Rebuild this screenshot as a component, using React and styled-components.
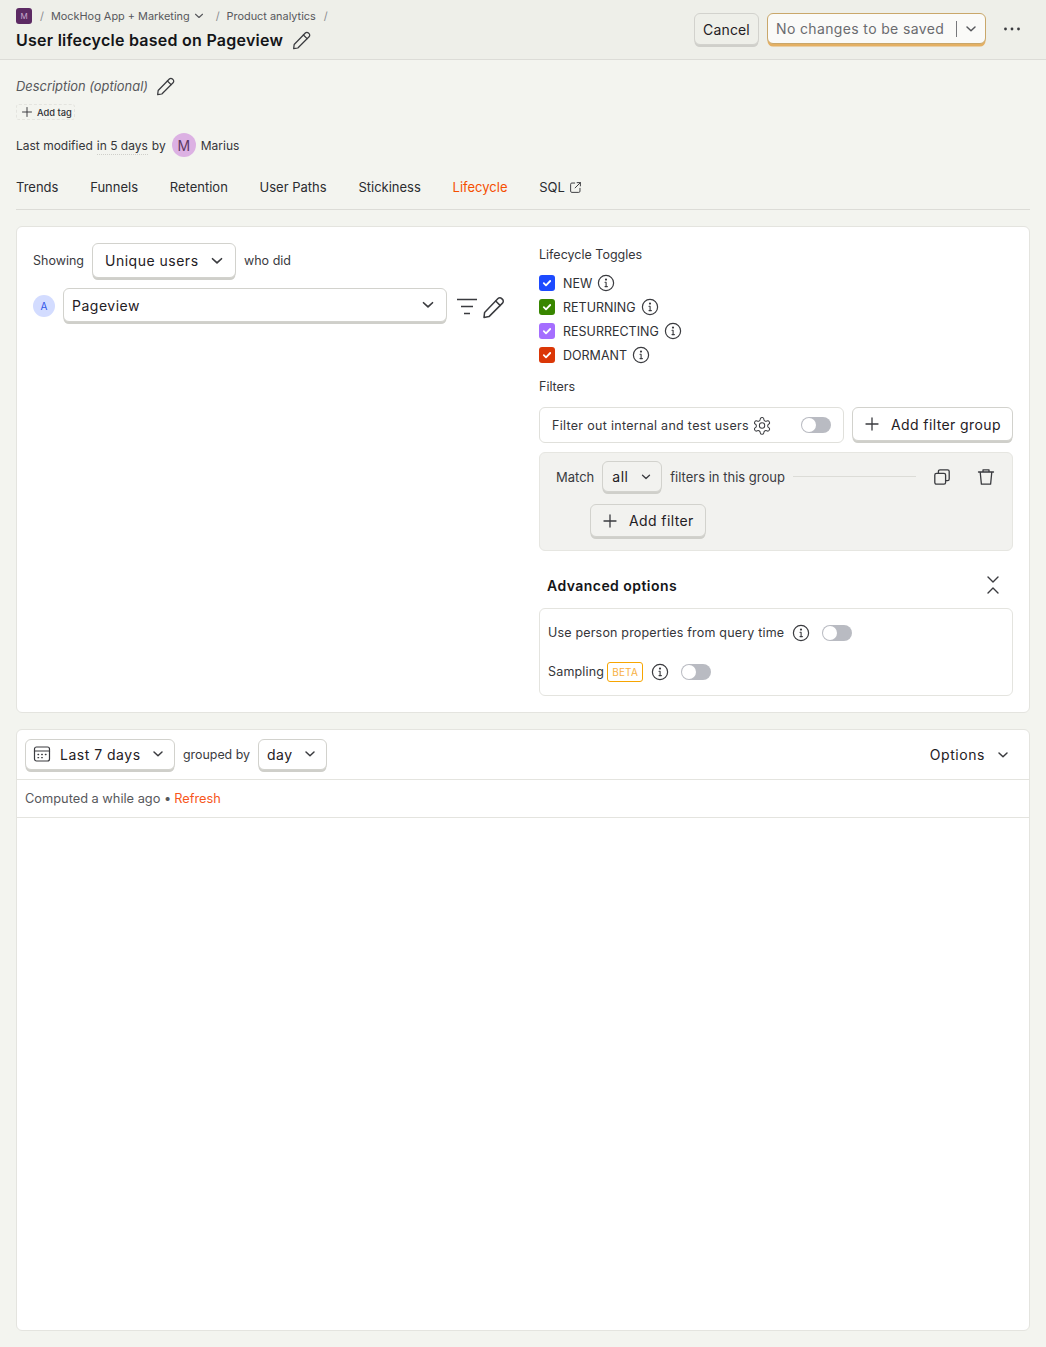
import React from 'react';
import styled, { createGlobalStyle } from 'styled-components';

const Global = createGlobalStyle`
  html, body { margin: 0; padding: 0; background: #f3f4ef; }
  body { font-family: Inter, "Noto Sans", sans-serif; font-size: 13px; color: #35363a; }
  * { box-sizing: border-box; }
`;

const Page = styled.div`
  width: 1046px;
  height: 1347px;
  overflow: hidden;
  background: #f3f4ef;
`;

const TopBar = styled.header`
  height: 60px;
  background: #eeefe9;
  border-bottom: 1px solid #dcdcd7;
  padding: 0 16px;
  display: flex;
  justify-content: space-between;
`;
const TitleBlock = styled.div`
  padding-top: 8px;
`;
const Crumbs = styled.div`
  display: flex;
  align-items: center;
  height: 16px;
  font-size: 10.9px;
  color: #57585c;
`;
const Logo = styled.span`
  width: 16px;
  height: 16px;
  border-radius: 3px;
  background: #5c2a63;
  color: #c9a9cf;
  font-size: 8px;
  display: flex;
  align-items: center;
  justify-content: center;
`;
const Slash = styled.span`
  color: #8a8b8f;
  margin: 0 ${p => p.$r ?? 7}px 0 ${p => p.$l ?? 8}px;
`;
const TitleRow = styled.div`
  display: flex;
  align-items: center;
  gap: 9px;
  height: 32px;
`;
const Title = styled.h1`
  margin: 0;
  font-size: 16px;
  line-height: 20px;
  font-weight: 600;
  letter-spacing: 0.25px;
  color: #141518;
`;
const Actions = styled.div`
  display: flex;
  align-items: flex-start;
  padding-top: 13px;
`;
const Btn = styled.button`
  font-family: inherit;
  display: inline-flex;
  align-items: center;
  justify-content: ${p => p.$between ? 'space-between' : 'flex-start'};
  flex: none;
  width: ${p => p.$w ? `${p.$w}px` : 'auto'};
  height: ${p => p.$h ?? 32}px;
  padding: 0 ${p => p.$pr ?? 10}px 0 ${p => p.$pl ?? 12}px;
  margin: 0;
  background: ${p => p.$bg ?? '#fff'};
  border: 1px solid #d2d2cd;
  border-radius: 6px;
  box-shadow: 0 2.5px 0 -0.5px #cfcfca;
  font-size: 14px;
  font-weight: 400;
  letter-spacing: 0.5px;
  color: #1f2024;
  white-space: nowrap;
`;
const CancelBtn = styled(Btn)`
  background: #eeefe9;
  margin-right: 8px;
  padding: 0;
  width: 65px;
  justify-content: center;
  letter-spacing: 0.15px;
`;
const SaveBtn = styled.button`
  font-family: inherit;
  width: 219px;
  height: 31px;
  display: flex;
  align-items: center;
  padding: 0 0 0 8px;
  background: #fafaf8;
  border: 1px solid #c9a76a;
  border-radius: 6px;
  box-shadow: 0 3px 0 -0.5px #e4b063;
  font-size: 14px;
  letter-spacing: 0.36px;
  color: #6a6b6f;
  white-space: nowrap;
`;
const SaveDivider = styled.span`
  width: 1px;
  height: 16px;
  background: #77787c;
  margin: 0 0 0 12px;
`;
const MoreBtn = styled.span`
  display: flex;
  margin: 8px 8px 0 16px;
`;

const Main = styled.main`
  padding: 0 16px;
`;
const Description = styled.div`
  display: flex;
  align-items: center;
  gap: 8px;
  height: 20px;
  margin-top: 16px;
  font-style: italic;
  color: #57585c;
  font-size: 12.9px;
`;
const TagButton = styled.div`
  margin-top: 8px;
  width: 59px;
  height: 16px;
  border: 1px dashed #e4e4df;
  border-radius: 3px;
  display: flex;
  align-items: center;
  gap: 4px;
  padding-left: 4px;
  font-size: 9.3px;
  font-weight: 500;
  color: #2f3034;
  white-space: nowrap;
`;
const Modified = styled.div`
  display: flex;
  align-items: center;
  height: 24px;
  margin-top: 13px;
  font-size: 12px;
  color: #35363a;
`;
const Dotted = styled.span`
  margin: 0 4px -2px;
  border-bottom: 1px dotted #cfcfca;
  padding-bottom: 1px;
`;
const Avatar = styled.span`
  width: 24px;
  height: 24px;
  border-radius: 50%;
  background: #dcb1e3;
  color: #5c3a62;
  font-size: 14px;
  display: flex;
  align-items: center;
  justify-content: center;
  margin: 0 5px 0 6px;
`;
const Tabs = styled.nav`
  display: flex;
  gap: 31.75px;
  margin-top: 22px;
  padding-bottom: 14px;
  border-bottom: 1px solid #dcdcd7;
`;
const Tab = styled.span`
  display: inline-flex;
  align-items: center;
  gap: 4px;
  font-size: 13px;
  line-height: 16px;
  color: ${p => p.$active ? '#f54e00' : '#2b2c30'};
`;
const Card = styled.section`
  background: #fff;
  border: 1px solid #e4e4df;
  border-radius: 6px;
`;
const QueryCard = styled(Card)`
  margin-top: 16px;
  height: 487px;
  padding: 16px;
  display: grid;
  grid-template-columns: 474px 474px;
  column-gap: 32px;
`;
const Column = styled.div`
  display: flex;
  flex-direction: column;
`;
const ShowingRow = styled.div`
  display: flex;
  align-items: center;
  gap: 8px;
  color: #3a3b3f;
  font-size: 12.5px;
`;
const SeriesRow = styled.div`
  display: flex;
  align-items: center;
  margin-top: 10px;
`;
const SeriesBadge = styled.span`
  flex: none;
  width: 22px;
  height: 22px;
  border-radius: 50%;
  background: #d3dcff;
  color: #2f55e8;
  font-size: 10px;
  display: flex;
  align-items: center;
  justify-content: center;
  margin: 2px 8px 0 0;
`;
const SeriesIcons = styled.span`
  display: flex;
  align-items: center;
  gap: 3px;
  margin: 3px 0 0 8px;
`;
const Label = styled.div`
  font-size: 12.5px;
  line-height: 16px;
  color: #35363a;
  margin-top: ${p => p.$mt ?? 0}px;
`;
const Toggles = styled.div`
  margin-top: 10px;
  display: flex;
  flex-direction: column;
  gap: 4px;
`;
const ToggleRow = styled.label`
  display: flex;
  align-items: center;
  height: 20px;
  font-size: 12.5px;
  color: #2f3034;
`;
const Check = styled.span`
  width: 16px;
  height: 16px;
  border-radius: 3px;
  background: ${p => p.$c};
  display: flex;
  align-items: center;
  justify-content: center;
  margin-right: 8px;
`;
const IconSlot = styled.span`
  display: flex;
  margin-left: ${p => p.$ml ?? 5}px;
`;
const FilterRow = styled.div`
  display: flex;
  gap: 8px;
  margin-top: 12px;
`;
const InternalBox = styled.div`
  width: 305px;
  height: 36px;
  border: 1px solid #e0e0db;
  border-radius: 6px;
  display: flex;
  align-items: center;
  padding: 0 12px;
  font-size: 12.5px;
  letter-spacing: 0.3px;
  color: #35363a;
  gap: 3px;
  white-space: nowrap;
`;
const Switch = styled.span`
  position: relative;
  display: block;
  flex: none;
  width: 30px;
  height: 16px;
  border-radius: 8px;
  background: #b9bbc2;
  margin-left: ${p => p.$ml ?? 0}px;
  &::after {
    content: '';
    position: absolute;
    left: 1px;
    top: 1px;
    width: 14px;
    height: 14px;
    border-radius: 50%;
    background: #fff;
  }
`;
const BtnLabel = styled.span`
  margin-left: ${p => p.$ml ?? 11}px;
  letter-spacing: 0.4px;
`;
const Group = styled.div`
  margin-top: 9px;
  height: 99px;
  background: #f2f2ef;
  border: 1px solid #e6e6e1;
  border-radius: 6px;
  padding: 8px 16px;
`;
const GroupHead = styled.div`
  display: flex;
  align-items: center;
  font-size: 13px;
  color: #3a3b3f;
`;
const MatchBtn = styled(Btn)`
  margin: 0 8px;
`;
const Rule = styled.span`
  width: 123px;
  height: 1px;
  background: #dcdcd7;
  margin: 0 17px 0 8px;
`;
const IconGap = styled.span`
  width: 26px;
`;
const AddFilter = styled(Btn)`
  margin: 12px 0 0 34px;
  background: #f2f2ef;
`;
const AdvHead = styled.div`
  display: flex;
  align-items: center;
  justify-content: space-between;
  height: 36px;
  margin-top: 16px;
  padding: 0 10px 0 8px;
  font-size: 14px;
  font-weight: 600;
  letter-spacing: 0.45px;
  color: #141518;
`;
const AdvBox = styled.div`
  margin-top: 5px;
  height: 88px;
  border: 1px solid #e4e4df;
  border-radius: 6px;
  padding: 0 8px;
  display: flex;
  flex-direction: column;
`;
const AdvRow = styled.div`
  display: flex;
  align-items: center;
  height: 39px;
  margin-top: ${p => p.$mt ?? 0}px;
  font-size: 12.5px;
  letter-spacing: 0.18px;
  color: #35363a;
`;
const Beta = styled.span`
  border: 1px solid #f7a501;
  border-radius: 3px;
  color: #f7b042;
  font-size: 10px;
  line-height: 18px;
  height: 20px;
  padding: 0 4px;
  margin-left: 3px;
`;
const ResultCard = styled(Card)`
  margin-top: 16px;
  height: 602px;
`;
const ResultBar = styled.div`
  height: 50px;
  border-bottom: 1px solid #e4e4df;
  display: flex;
  align-items: center;
  padding: 0 8px 1px;
  gap: 8px;
  font-size: 12.4px;
  color: #3a3b3f;
`;
const DateLabel = styled.span`
  display: flex;
  align-items: center;
  gap: 9px;
`;
const OptionsBtn = styled.span`
  margin: 1px 0 0 auto;
  display: flex;
  align-items: center;
  gap: 10px;
  padding-right: 10px;
  font-size: 14px;
  font-weight: 400;
  letter-spacing: 0.55px;
  color: #1f2024;
`;
const Computed = styled.div`
  height: 38px;
  border-bottom: 1px solid #e4e4df;
  display: flex;
  align-items: center;
  padding: 0 8px;
  gap: 3px;
  font-size: 12.8px;
  color: #57585c;
`;
const Refresh = styled.span`
  color: #f7571b;
`;

const Svg = ({ size = 16, sw = 1.4, color = '#3a3b3f', vb = 24, children }) => (
  <svg width={size} height={size} viewBox={`0 0 ${vb} ${vb}`} fill="none" stroke={color} strokeWidth={sw} strokeLinecap="round" strokeLinejoin="round">{children}</svg>
);
const Pencil = ({ size = 20 }) => (
  <Svg size={size} sw={1.5}>
    <path d="M2.6 17.4 16 3.6a2.6 2.6 0 0 1 3.7 0l.8.8a2.6 2.6 0 0 1 0 3.7L7 21.6l-5 .8z" />
    <path d="m13.7 6 4.4 4.4" />
  </Svg>
);
const Chevron = ({ size = 16, color = '#3a3b3f', sw = 1.5 }) => (
  <Svg size={size} sw={sw} color={color} vb={16}><path d="m4 6 4 3.7L12 6" /></Svg>
);
const Plus = ({ size = 16, color = '#3a3b3f', sw = 1.3 }) => (
  <Svg size={size} sw={sw} color={color} vb={16}><path d="M8 2v12M2 8h12" /></Svg>
);
const Info = () => (
  <Svg size={18} sw={1.2} vb={18} color="#3a3b3f">
    <circle cx="9" cy="9" r="7.6" />
    <path d="M8 8.3h1.1v4.2M8 12.6h2.4" strokeWidth="1.1" />
    <circle cx="9" cy="5.6" r=".5" fill="#3a3b3f" />
  </Svg>
);
const CheckMark = () => (
  <svg width="12" height="12" viewBox="0 0 12 12" fill="none" stroke="#fff" strokeWidth="1.8" strokeLinecap="round" strokeLinejoin="round">
    <path d="m2.8 6.2 2.2 2.1 4.2-4.3" />
  </svg>
);
const FilterLines = () => (
  <Svg size={24} sw={1.6} vb={24} color="#3a3b3f"><path d="M2 4.5h20M6 11.5h12M9 18.5h6" strokeLinecap="butt" /></Svg>
);
const Gear = () => (
  <Svg size={21} sw={1.2} vb={24} color="#3a3b3f">
    <circle cx="12" cy="12" r="3.2" />
    <path d="M12.2 2.5h-.4a2 2 0 0 0-2 2v.2a2 2 0 0 1-1 1.7l-.4.3a2 2 0 0 1-2 0l-.2-.1a2 2 0 0 0-2.7.7l-.2.4a2 2 0 0 0 .7 2.7l.2.1a2 2 0 0 1 1 1.7v.6a2 2 0 0 1-1 1.7l-.2.1a2 2 0 0 0-.7 2.7l.2.4a2 2 0 0 0 2.7.7l.2-.1a2 2 0 0 1 2 0l.4.3a2 2 0 0 1 1 1.7v.2a2 2 0 0 0 2 2h.4a2 2 0 0 0 2-2v-.2a2 2 0 0 1 1-1.7l.4-.3a2 2 0 0 1 2 0l.2.1a2 2 0 0 0 2.7-.7l.2-.4a2 2 0 0 0-.7-2.7l-.2-.1a2 2 0 0 1-1-1.7v-.6a2 2 0 0 1 1-1.7l.2-.1a2 2 0 0 0 .7-2.7l-.2-.4a2 2 0 0 0-2.7-.7l-.2.1a2 2 0 0 1-2 0l-.4-.3a2 2 0 0 1-1-1.7v-.2a2 2 0 0 0-2-2z" />
  </Svg>
);
const CopyIcon = () => (
  <Svg size={18} sw={1.3} vb={18}>
    <rect x="1.8" y="5.4" width="10.8" height="10.8" rx="1.6" />
    <path d="M5.4 5.2V3.4a1.6 1.6 0 0 1 1.6-1.6h7.6a1.6 1.6 0 0 1 1.6 1.6V11a1.6 1.6 0 0 1-1.6 1.6h-1.9" />
  </Svg>
);
const Trash = () => (
  <Svg size={18} sw={1.3} vb={18}>
    <path d="M1.5 4h15M6 4V1.8h6V4M3.2 4l1.2 12.2h9.2L14.8 4" />
  </Svg>
);
const Collapse = () => (
  <Svg size={20} sw={1.4} vb={20}>
    <path d="m5 2 5 5 5-5M5 18l5-5 5 5" />
  </Svg>
);
const Calendar = () => (
  <Svg size={18} sw={1.2} vb={18}>
    <rect x="1.5" y="2" width="15" height="14" rx="2" />
    <path d="M1.5 6h15" />
    <path d="M5 9.5h.6M8.7 9.5h.6M12.4 9.5h.6M5 12.7h.6M8.7 12.7h.6" strokeWidth="1.3" />
  </Svg>
);
const External = () => (
  <Svg size={13} sw={1.2} vb={16}>
    <path d="M7 2.5H3.5a1.5 1.5 0 0 0-1.5 1.5v8.5A1.5 1.5 0 0 0 3.5 14H12a1.5 1.5 0 0 0 1.5-1.5V9" />
    <path d="M10 2h4v4M14 2 7.5 8.5" />
  </Svg>
);
const Dots = () => (
  <svg width="20" height="16" viewBox="0 0 20 16" fill="#3a3b3f">
    <circle cx="3.5" cy="8" r="1.4" /><circle cx="10" cy="8" r="1.4" /><circle cx="16.5" cy="8" r="1.4" />
  </svg>
);

const TAB_NAMES = ['Trends', 'Funnels', 'Retention', 'User Paths', 'Stickiness', 'Lifecycle'];
const TOGGLES = [['NEW', '#1d4aff'], ['RETURNING', '#388600'], ['RESURRECTING', '#a56eff'], ['DORMANT', '#db3707']];

export default function App() {
  return (
    <Page>
      <Global />
      <TopBar>
        <TitleBlock>
          <Crumbs>
            <Logo>M</Logo>
            <Slash>/</Slash>
            MockHog App + Marketing
            <IconSlot $ml={2}><Chevron size={14} color="#57585c" sw={1.3} /></IconSlot>
            <Slash $l={10}>/</Slash>
            Product analytics
            <Slash>/</Slash>
          </Crumbs>
          <TitleRow>
            <Title>User lifecycle based on Pageview</Title>
            <Pencil />
          </TitleRow>
        </TitleBlock>
        <Actions>
          <CancelBtn>Cancel</CancelBtn>
          <SaveBtn>
            No changes to be saved
            <SaveDivider />
            <IconSlot $ml={6}><Chevron size={16} color="#57585c" /></IconSlot>
          </SaveBtn>
          <MoreBtn><Dots /></MoreBtn>
        </Actions>
      </TopBar>
      <Main>
        <Description>Description (optional)<Pencil /></Description>
        <TagButton><Plus size={12} />Add tag</TagButton>
        <Modified>
          Last modified<Dotted>in 5 days</Dotted>by
          <Avatar>M</Avatar>Marius
        </Modified>
        <Tabs>
          {TAB_NAMES.map(t => <Tab key={t} $active={t === 'Lifecycle'}>{t}</Tab>)}
          <Tab>SQL <External /></Tab>
        </Tabs>
        <QueryCard>
          <Column>
            <ShowingRow>
              Showing
              <Btn $w={144} $h={35} $between $pl={12} $pr={9}>Unique users<Chevron size={18} /></Btn>
              who did
            </ShowingRow>
            <SeriesRow>
              <SeriesBadge>A</SeriesBadge>
              <Btn $w={384} $h={34} $between $pl={8} $pr={9}>Pageview<Chevron size={18} /></Btn>
              <SeriesIcons><FilterLines /><Pencil size={24} /></SeriesIcons>
            </SeriesRow>
          </Column>
          <Column>
            <Label $mt={4}>Lifecycle Toggles</Label>
            <Toggles>
              {TOGGLES.map(([name, c]) => (
                <ToggleRow key={name}>
                  <Check $c={c}><CheckMark /></Check>
                  {name}
                  <IconSlot><Info /></IconSlot>
                </ToggleRow>
              ))}
            </Toggles>
            <Label $mt={14}>Filters</Label>
            <FilterRow>
              <InternalBox>
                Filter out internal and test users
                <Gear />
                <Switch $ml={26} />
              </InternalBox>
              <Btn $w={161} $h={34} $pl={11}><Plus size={16} /><BtnLabel>Add filter group</BtnLabel></Btn>
            </FilterRow>
            <Group>
              <GroupHead>
                Match
                <MatchBtn $w={60} $h={31} $between $pl={9} $pr={8} $bg="#f2f2ef">all<Chevron size={14} /></MatchBtn>
                filters in this group
                <Rule />
                <CopyIcon />
                <IconGap />
                <Trash />
              </GroupHead>
              <AddFilter $w={116} $h={33} $pl={11}><Plus size={16} /><BtnLabel>Add filter</BtnLabel></AddFilter>
            </Group>
            <AdvHead>Advanced options<Collapse /></AdvHead>
            <AdvBox>
              <AdvRow $mt={4}>
                Use person properties from query time
                <IconSlot $ml={8}><Info /></IconSlot>
                <Switch $ml={12} />
              </AdvRow>
              <AdvRow>
                Sampling<Beta>BETA</Beta>
                <IconSlot $ml={8}><Info /></IconSlot>
                <Switch $ml={12} />
              </AdvRow>
            </AdvBox>
          </Column>
        </QueryCard>
        <ResultCard>
          <ResultBar>
            <Btn $w={150} $h={31} $between $pl={7} $pr={8}>
              <DateLabel><Calendar />Last 7 days</DateLabel><Chevron size={16} />
            </Btn>
            grouped by
            <Btn $w={69} $h={31} $between $pl={8} $pr={8}>day<Chevron size={16} /></Btn>
            <OptionsBtn>Options<Chevron size={16} /></OptionsBtn>
          </ResultBar>
          <Computed>Computed a while ago • <Refresh>Refresh</Refresh></Computed>
        </ResultCard>
      </Main>
    </Page>
  );
}
